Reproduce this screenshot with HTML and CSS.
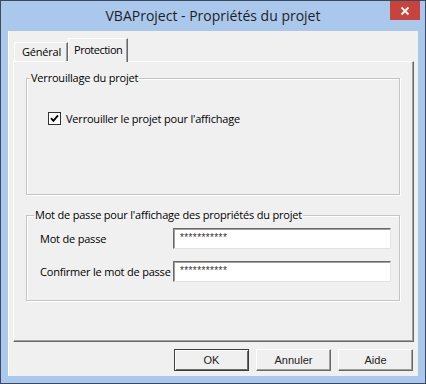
FILE: index.html
```html
<!DOCTYPE html>
<html lang="fr">
<head>
    <meta charset="UTF-8" />
    <title>VBAProject - Propriétés du projet</title>
    <link rel="stylesheet" href="styles.css">
</head>
<body>
    <div class="window">
        <div class="titlebar">
            <span class="title">VBAProject - Propriétés du projet</span>
            <span class="close">
                <svg width="10" height="10" viewBox="0 0 10 10"><path d="M1.5 1.5 L8.5 8.5 M8.5 1.5 L1.5 8.5" stroke="#fff" stroke-width="1.8"/></svg>
            </span>
        </div>
        <div class="client">
            <div class="tabs">
                <div class="tab">Général</div>
                <div class="tab active">Protection</div>
            </div>
            <div class="panel">
                <fieldset class="group lock">
                    <legend>Verrouillage du projet</legend>
                    <div class="group-body">
                        <label class="check">
                            <span class="box">
                                <svg width="9" height="9" viewBox="0 0 9 9"><path d="M1 4.2 L3.4 6.8 L8 1.4" fill="none" stroke="#000" stroke-width="1.8"/></svg>
                            </span>
                            Verrouiller le projet pour l'affichage
                        </label>
                    </div>
                </fieldset>
                <fieldset class="group pass">
                    <legend>Mot de passe pour l'affichage des propriétés du projet</legend>
                    <div class="group-body">
                        <div class="row">
                            <span class="lbl">Mot de passe</span>
                            <span class="field">***********</span>
                        </div>
                        <div class="row">
                            <span class="lbl">Confirmer le mot de passe</span>
                            <span class="field">***********</span>
                        </div>
                    </div>
                </fieldset>
            </div>
            <div class="buttons">
                <button class="btn default">OK</button>
                <button class="btn">Annuler</button>
                <button class="btn">Aide</button>
            </div>
        </div>
    </div>
</body>
</html>
```

FILE: styles.css
```css
:root {
    --frame: #aac8ec;
    --face: #f0f0f0;
    --shadow: #a0a0a0;
    --dark: #696969;
    --text: #000;
}
* {
    box-sizing: border-box;
}
body {
    margin: 0;
    font-family: "Open Sans", "Noto Sans", sans-serif;
    font-size: 11px;
    letter-spacing: -0.2px;
    color: var(--text);
}
.window {
    width: 426px;
    height: 384px;
    border: 1px solid #3c4a5c;
    background-color: var(--frame);
    display: flex;
    flex-direction: column;
}
.titlebar {
    height: 30px;
    flex: none;
    display: grid;
    grid-template-columns: 1fr auto 1fr;
    align-items: start;
}
.title {
    grid-column: 2;
    font-size: 14px;
    letter-spacing: 0;
    line-height: 30px;
    color: #1e1e1e;
}
.close {
    grid-column: 3;
    justify-self: end;
    margin-right: 5px;
    width: 30px;
    height: 19px;
    background-color: #c7433c;
    display: flex;
    align-items: center;
    justify-content: center;
}
.client {
    flex: 1;
    margin: 0 7px 7px;
    background-color: var(--face);
    padding: 7px 4px 0 5px;
    display: flex;
    flex-direction: column;
    box-shadow: inset 1px 0 0 #fff;
}
/* Onglets */
.tabs {
    display: flex;
    align-items: flex-end;
    height: 23px;
    flex: none;
    padding-left: 1px;
}
.tab {
    height: 19px;
    padding: 0 6px 0 7px;
    line-height: 17px;
    border-top: 1px solid #fff;
    border-left: 1px solid #fff;
    border-right: 1px solid var(--dark);
    box-shadow: inset -1px 0 0 var(--shadow);
}
.tab.active {
    height: 24px;
    line-height: 21px;
    padding: 0 5px;
    letter-spacing: -0.5px;
    margin-bottom: -1px;
    background-color: var(--face);
    position: relative;
    z-index: 1;
}
.panel {
    height: 281px;
    flex: none;
    border-top: 1px solid #fff;
    border-left: 1px solid #fff;
    border-right: 1px solid var(--dark);
    border-bottom: 1px solid var(--dark);
    box-shadow: inset -1px -1px 0 var(--shadow);
    padding: 9px 13px 0 12px;
    display: flex;
    flex-direction: column;
}
.group {
    margin: 0;
    min-width: 0;
    border: 1px solid #c4c4c4;
    box-shadow: 1px 1px 0 #fff, inset 1px 1px 0 #fff;
    padding: 0;
}
.group legend {
    padding: 0 1px;
    margin-left: 3px;
    line-height: 14px;
}
.pass legend {
    margin-left: 7px;
}
.lock {
    height: 124px;
}
.lock .group-body {
    padding: 26px 0 0 21px;
}
.check {
    display: flex;
    align-items: center;
    gap: 5px;
}
.box {
    width: 13px;
    height: 13px;
    border: 1px solid #333;
    background-color: #fff;
    display: flex;
    align-items: center;
    justify-content: center;
}
.pass {
    margin-top: 13px;
    height: 93px;
}
.pass .group-body {
    padding: 6px 8px 0 13px;
    display: flex;
    flex-direction: column;
    gap: 12px;
}
.row {
    display: flex;
    align-items: center;
}
.lbl {
    flex: 1;
    white-space: nowrap;
}
.field {
    width: 218px;
    height: 21px;
    line-height: 17px;
    padding-left: 6px;
    background-color: #fff;
    border-top: 1px solid var(--dark);
    border-left: 1px solid var(--dark);
    border-right: 1px solid #e3e3e3;
    border-bottom: 1px solid #e3e3e3;
    box-shadow: inset 1px 1px 0 var(--shadow);
    font-family: "Liberation Sans", sans-serif;
    font-size: 10px;
    letter-spacing: 0.4px;
    color: #333;
}
/* Boutons */
.buttons {
    display: flex;
    justify-content: flex-end;
    gap: 7px;
    padding-top: 7px;
    padding-right: 1px;
}
.btn {
    width: 75px;
    height: 22px;
    margin: 0;
    padding: 0;
    background-color: var(--face);
    font-family: "Liberation Sans", Arial, sans-serif;
    font-size: 11px;
    letter-spacing: 0;
    color: #222;
    border-top: 1px solid #fff;
    border-left: 1px solid #fff;
    border-right: 1px solid var(--dark);
    border-bottom: 1px solid var(--dark);
    box-shadow: inset -1px -1px 0 var(--shadow);
}
.btn.default {
    border: 1px solid #3c3c3c;
    box-shadow: inset 1px 1px 0 #fff, inset -1px -1px 0 var(--dark);
}
```
